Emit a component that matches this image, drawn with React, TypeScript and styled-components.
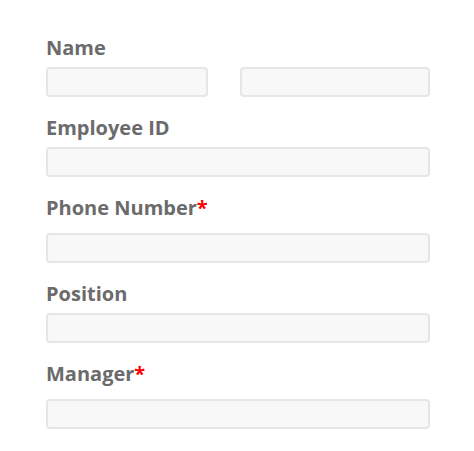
import React from "react";
import styled, { createGlobalStyle } from "styled-components";

const GlobalStyle = createGlobalStyle`
  body {
    margin: 0;
    background: #ffffff;
    font-family: "Open Sans", "Liberation Sans", sans-serif;
  }
`;

const Form = styled.form`
  display: flex;
  flex-direction: column;
  width: 384px;
  padding: 36px 0 0 46px;
`;

const Field = styled.div`
  display: flex;
  flex-direction: column;
  margin-bottom: 19px;
`;

const Label = styled.label<{ $required?: boolean }>`
  font-size: 20px;
  line-height: 24px;
  font-weight: 700;
  color: #6b6b6b;
  margin-bottom: ${({ $required }) => ($required ? "13px" : "7px")};
`;

const Star = styled.span`
  color: #ff0000;
`;

const Row = styled.div`
  display: grid;
  grid-template-columns: 162px 1fr;
  column-gap: 32px;
`;

const Input = styled.input`
  box-sizing: border-box;
  width: 100%;
  height: 30px;
  border: 2px solid #e4e7e5;
  border-radius: 4px;
  background: #f8f8f8;
  outline: none;
  padding: 0 8px;
  font: inherit;
`;

export default function App() {
  return (
    <>
      <GlobalStyle />
      <Form>
        <Field>
          <Label>Name</Label>
          <Row>
            <Input type="text" />
            <Input type="text" />
          </Row>
        </Field>
        <Field>
          <Label>Employee ID</Label>
          <Input type="text" />
        </Field>
        <Field>
          <Label $required>
            Phone Number<Star>*</Star>
          </Label>
          <Input type="tel" />
        </Field>
        <Field>
          <Label>Position</Label>
          <Input type="text" />
        </Field>
        <Field>
          <Label $required>
            Manager<Star>*</Star>
          </Label>
          <Input type="text" />
        </Field>
      </Form>
    </>
  );
}
